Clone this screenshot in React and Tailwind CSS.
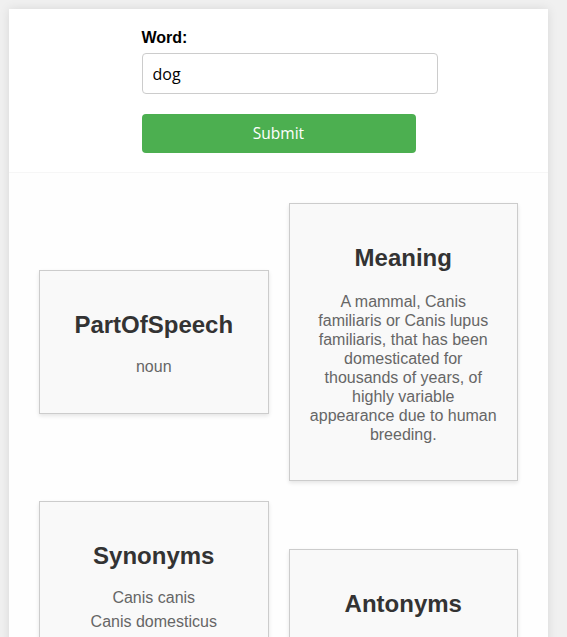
import { useState } from 'react';

const synonyms = ['Canis canis', 'Canis domesticus', 'Canis familiaris', 'domestic dog', 'pooch'];

const Card = ({ title, children }) => (
  <div className="bg-[#f9f9f9] border border-[#cccccc] shadow-[0_2px_4px_rgba(0,0,0,0.1)] px-5 pt-[40px] pb-[36px] text-center">
    <h2 className="text-[24px] leading-[27.6px] font-bold text-[#333333] mb-5">{title}</h2>
    {children}
  </div>
);

const App = () => {
  const [word, setWord] = useState('dog');

  return (
    <div className="min-h-screen bg-[#f0f0f0] pt-[9px] font-['Liberation_Sans',Arial,sans-serif]">
      <div className="ml-[9px] w-[539px] bg-white shadow-[0_0_10px_rgba(0,0,0,0.1)]">
        <div className="flex justify-center pt-5 pb-[19px] border-b border-[#f6f6f6]">
          <form className="w-[274px] flex flex-col" onSubmit={(e) => e.preventDefault()}>
            <label className="text-[16px] leading-[18px] font-bold text-black mb-[6px]">Word:</label>
            <input
              value={word}
              onChange={(e) => setWord(e.target.value)}
              className="w-[296px] h-[41px] px-[10px] border border-[#cccccc] rounded-[4px] bg-white text-[16px] text-black font-['Open_Sans',sans-serif] outline-none"
            />
            <button
              type="submit"
              className="mt-5 h-[39px] w-full rounded-[4px] bg-[#4caf50] text-white text-[15.5px] font-['Open_Sans',sans-serif]"
            >
              Submit
            </button>
          </form>
        </div>
        <div className="grid grid-cols-2 gap-5 items-center p-[30px] bg-[#fefefe]">
          <Card title="PartOfSpeech">
            <p className="text-[16px] leading-[18.4px] text-[#666666]">noun</p>
          </Card>
          <Card title="Meaning">
            <p className="text-[16px] leading-[19px] text-[#666666]">
              A mammal, Canis familiaris or Canis lupus familiaris, that has been domesticated for thousands of years, of highly variable appearance due to human breeding.
            </p>
          </Card>
          <Card title="Synonyms">
            <ul className="flex flex-col gap-[5.6px]">
              {synonyms.map((s) => (
                <li key={s} className="text-[16px] leading-[18.4px] text-[#666666]">{s}</li>
              ))}
            </ul>
          </Card>
          <Card title="Antonyms">
            <p className="text-[16px] leading-[18.4px] text-[#666666]">None</p>
          </Card>
        </div>
      </div>
    </div>
  );
};

export default App;
